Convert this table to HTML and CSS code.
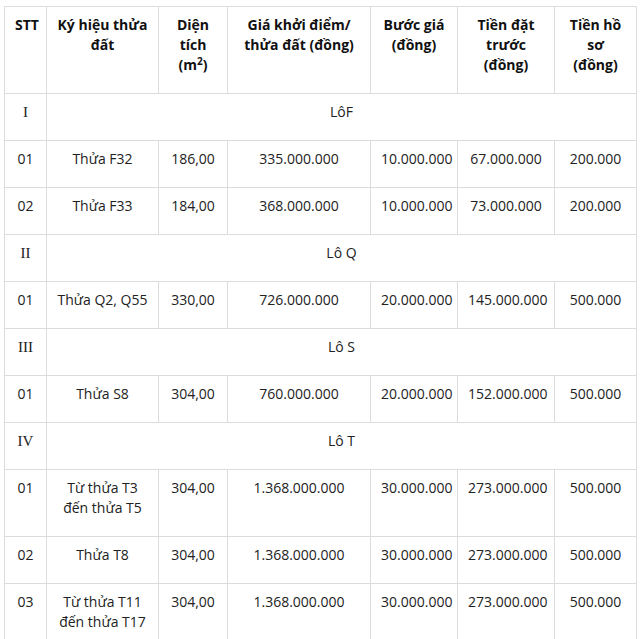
FILE: index.html
```html
<!DOCTYPE html>
<html lang="vi">
<head>
<meta charset="utf-8">
<link rel="stylesheet" href="styles.css">
</head>
<body>
<table class="auction">
  <colgroup>
    <col class="c1"><col class="c2"><col class="c3"><col class="c4"><col class="c5"><col class="c6"><col class="c7">
  </colgroup>
  <thead>
    <tr>
      <th>STT</th>
      <th>Ký hiệu thửa đất</th>
      <th>Diện tích (m<sup>2</sup>)</th>
      <th>Giá khởi điểm/ thửa đất (đồng)</th>
      <th>Bước giá (đồng)</th>
      <th>Tiền đặt trước (đồng)</th>
      <th>Tiền hồ sơ (đồng)</th>
    </tr>
  </thead>
  <tbody>
    <tr><td class="roman">I</td><td colspan="6">LôF</td></tr>
    <tr><td>01</td><td>Thửa F32</td><td>186,00</td><td>335.000.000</td><td>10.000.000</td><td>67.000.000</td><td>200.000</td></tr>
    <tr><td>02</td><td>Thửa F33</td><td>184,00</td><td>368.000.000</td><td>10.000.000</td><td>73.000.000</td><td>200.000</td></tr>
    <tr><td class="roman">II</td><td colspan="6">Lô Q</td></tr>
    <tr><td>01</td><td>Thửa Q2, Q55</td><td>330,00</td><td>726.000.000</td><td>20.000.000</td><td>145.000.000</td><td>500.000</td></tr>
    <tr><td class="roman">III</td><td colspan="6">Lô S</td></tr>
    <tr><td>01</td><td>Thửa S8</td><td>304,00</td><td>760.000.000</td><td>20.000.000</td><td>152.000.000</td><td>500.000</td></tr>
    <tr><td class="roman">IV</td><td colspan="6">Lô T</td></tr>
    <tr><td>01</td><td>Từ thửa T3<br>đến thửa T5</td><td>304,00</td><td>1.368.000.000</td><td>30.000.000</td><td>273.000.000</td><td>500.000</td></tr>
    <tr><td>02</td><td>Thửa T8</td><td>304,00</td><td>1.368.000.000</td><td>30.000.000</td><td>273.000.000</td><td>500.000</td></tr>
    <tr><td>03</td><td>Từ thửa T11<br>đến thửa T17</td><td>304,00</td><td>1.368.000.000</td><td>30.000.000</td><td>273.000.000</td><td>500.000</td></tr>
  </tbody>
</table>
</body>
</html>
```
FILE: styles.css
```css
html, body {
  margin: 0;
  padding: 0;
  background: #fff;
}
body {
  padding: 6px 0 0 4px;
  font-family: "Open Sans", "Noto Sans", sans-serif;
  font-size: 14px;
  color: #222;
}
.auction {
  border-collapse: collapse;
  table-layout: fixed;
  width: 633px;
}
.c1 { width: 42px; }
.c2 { width: 112px; }
.c3 { width: 69px; }
.c4 { width: 143px; }
.c5 { width: 87px; }
.c6 { width: 97px; }
.c7 { width: 82px; }
.auction th,
.auction td {
  border: 1px solid #dcdcdc;
  padding: 8px 10px 18px;
  line-height: 20px;
  text-align: center;
  vertical-align: top;
}
.auction th {
  font-weight: 700;
  color: #111;
}
.auction sup {
  font-size: 10px;
  line-height: 0;
  vertical-align: 5px;
}
.auction td.roman {
  font-family: "Liberation Serif", "Times New Roman", serif;
  font-size: 15px;
}
```
